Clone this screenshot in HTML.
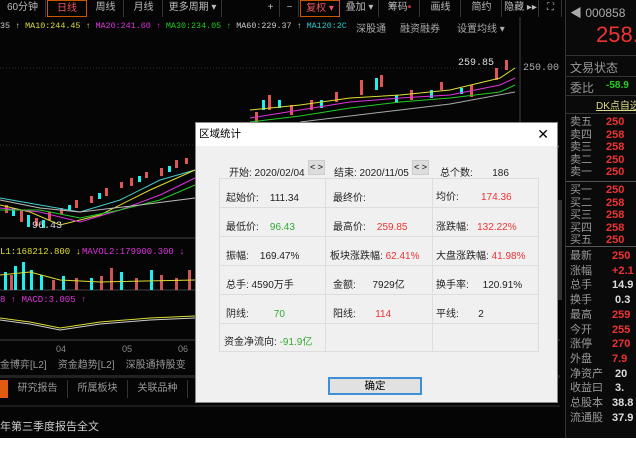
<!DOCTYPE html>
<html><head><meta charset="utf-8"><style>
*{margin:0;padding:0;box-sizing:border-box}
body{width:636px;height:449px;background:#fff;overflow:hidden;position:relative;font-family:"Liberation Sans","Noto Sans CJK SC",sans-serif;font-size:11px}
.abs{position:absolute;white-space:nowrap}
#main{position:absolute;left:0;top:0;width:636px;height:438px;background:#050505}
.tb{position:absolute;top:0;height:17px;color:#bbb;font-size:10px;line-height:16px;text-align:center;border-right:1px solid #333;overflow:hidden;white-space:nowrap}
.rp{position:absolute;left:565px;top:0;width:71px;height:438px;background:#0a0a0a;border-left:1px solid #333;overflow:hidden}
.rl{position:absolute;left:4px;color:#999;font-size:11px}
.rv{position:absolute;left:40px;color:#e33;font-weight:bold;font-size:11px}
#dlg{position:absolute;left:195px;top:122px;width:363px;height:281px;background:#f0f0f0;border:1px solid #888}
#dlg .title{height:23px;background:#fff;font-size:10.5px;line-height:23px;padding-left:3px;color:#000}
.cell{position:absolute;font-size:10px;color:#222;white-space:nowrap}
.r{color:#e33}.g{color:#3a3}
</style></head><body>
<div id="main">
<svg width="563" height="438" style="position:absolute;left:0;top:0">
<line x1="0" y1="68" x2="520" y2="68" stroke="#333" stroke-dasharray="1,2"/>
<line x1="0" y1="145" x2="520" y2="145" stroke="#333" stroke-dasharray="1,2"/>
<line x1="0" y1="238" x2="560" y2="238" stroke="#444"/>
<line x1="0" y1="290" x2="560" y2="290" stroke="#444"/>
<line x1="0" y1="340" x2="560" y2="340" stroke="#444"/>
<line x1="520" y1="17" x2="520" y2="360" stroke="#444"/>
<g fill="#e05555">
<rect x="5" y="205" width="3" height="8"/><rect x="20" y="210" width="3" height="12"/><rect x="35" y="218" width="3" height="8"/><rect x="48" y="212" width="3" height="8"/><rect x="60" y="208" width="3" height="6"/><rect x="75" y="200" width="3" height="8"/><rect x="90" y="196" width="3" height="7"/><rect x="105" y="188" width="3" height="8"/><rect x="120" y="182" width="3" height="6"/><rect x="130" y="178" width="3" height="8"/><rect x="145" y="172" width="3" height="6"/><rect x="160" y="168" width="3" height="8"/><rect x="175" y="160" width="3" height="8"/><rect x="185" y="158" width="3" height="6"/>
<rect x="255" y="112" width="3" height="10"/><rect x="268" y="95" width="3" height="15"/><rect x="290" y="105" width="3" height="10"/><rect x="310" y="100" width="3" height="10"/><rect x="335" y="92" width="3" height="10"/><rect x="360" y="80" width="3" height="15"/><rect x="380" y="75" width="3" height="12"/><rect x="410" y="90" width="3" height="10"/><rect x="440" y="82" width="3" height="8"/><rect x="470" y="85" width="3" height="12"/><rect x="495" y="68" width="3" height="12"/><rect x="505" y="60" width="3" height="10"/>
</g>
<g fill="#2ee">
<rect x="12" y="208" width="3" height="8"/><rect x="27" y="215" width="3" height="12"/><rect x="42" y="220" width="3" height="8"/><rect x="68" y="205" width="3" height="6"/><rect x="98" y="193" width="3" height="6"/><rect x="138" y="176" width="3" height="6"/><rect x="168" y="166" width="3" height="6"/>
<rect x="262" y="100" width="3" height="10"/><rect x="278" y="100" width="3" height="8"/><rect x="320" y="100" width="3" height="8"/><rect x="375" y="78" width="3" height="12"/><rect x="395" y="95" width="3" height="8"/><rect x="430" y="90" width="3" height="8"/><rect x="460" y="88" width="3" height="6"/></g>
<polyline points="0,198 40,205 80,212 120,200 160,180 195,170" fill="none" stroke="#4cc"/>
<polyline points="0,205 30,212 60,225 100,215 150,190 195,170" fill="none" stroke="#dd3"/>
<polyline points="0,208 40,212 80,222 120,210 160,195 195,178" fill="none" stroke="#d3d"/>
<polyline points="0,210 40,210 80,218 120,210 160,200 195,185" fill="none" stroke="#2c2"/>
<polyline points="0,200 40,208 80,212 140,205 195,198" fill="none" stroke="#bbb"/>
<polyline points="250,110 300,105 350,98 400,95 450,90 500,78 515,68" fill="none" stroke="#dd3"/>
<polyline points="250,118 300,110 350,102 400,98 450,95 500,85 515,78" fill="none" stroke="#d3d"/>
<polyline points="250,122 300,116 350,108 400,102 450,98 500,92 515,85" fill="none" stroke="#2c2"/>
<polyline points="300,122 400,110 450,104 515,92" fill="none" stroke="#aaa"/>
<text x="32" y="228" fill="#ddd" font-size="10" font-family="Liberation Mono">96.43</text>
<text x="458" y="65" fill="#ddd" font-size="10" font-family="Liberation Mono">259.85</text>
<text x="523" y="70" fill="#aaa" font-size="10" font-family="Liberation Mono">250.00</text>
<text x="523" y="150" fill="#aaa" font-size="10" font-family="Liberation Mono">200.00</text>
<text x="0" y="254" fill="#dd3" font-size="9" font-family="Liberation Mono">L1:168212.800 ↓</text>
<text x="82" y="254" fill="#d3d" font-size="9" font-family="Liberation Mono">MAVOL2:179900.300 ↓</text>
<g fill="#2ee"><rect x="4" y="272" width="3" height="18"/><rect x="14" y="266" width="3" height="24"/><rect x="22" y="262" width="3" height="28"/><rect x="30" y="270" width="3" height="20"/><rect x="40" y="275" width="3" height="15"/><rect x="62" y="276" width="3" height="14"/><rect x="90" y="278" width="3" height="12"/><rect x="120" y="272" width="3" height="18"/><rect x="150" y="270" width="3" height="20"/></g>
<g fill="#c55"><rect x="10" y="275" width="3" height="15"/><rect x="52" y="280" width="3" height="10"/><rect x="75" y="278" width="3" height="12"/><rect x="100" y="276" width="3" height="14"/><rect x="110" y="268" width="3" height="22"/><rect x="135" y="278" width="3" height="12"/><rect x="160" y="275" width="3" height="15"/><rect x="175" y="278" width="3" height="12"/><rect x="188" y="270" width="3" height="20"/></g>
<polyline points="0,275 30,272 60,280 100,282 195,280" fill="none" stroke="#dd3"/>
<text x="0" y="302" fill="#d3d" font-size="9" font-family="Liberation Mono">8 ↑ MACD:3.005 ↑</text>
<polyline points="0,318 30,322 60,328 100,322 150,318 195,316" fill="none" stroke="#dd3"/>
<polyline points="0,320 30,324 60,330 100,324 150,320 195,318" fill="none" stroke="#ccc"/>
<text x="56" y="352" fill="#888" font-size="9">04</text><text x="122" y="352" fill="#888" font-size="9">05</text><text x="178" y="352" fill="#888" font-size="9">06</text>
</svg>
<div class="tb" style="left:0;width:46px">60分钟</div>
<div class="tb" style="left:47px;width:40px;border:1px solid #c50;color:#e55">日线</div>
<div class="tb" style="left:88px;width:36px">周线</div>
<div class="tb" style="left:125px;width:38px">月线</div>
<div class="tb" style="left:164px;width:58px">更多周期 ▾</div>
<div class="tb" style="left:262px;width:18px">+</div>
<div class="tb" style="left:281px;width:18px">−</div>
<div class="tb" style="left:300px;width:40px;border:1px solid #c50;color:#e55">复权 ▾</div>
<div class="tb" style="left:341px;width:38px">叠加 ▾</div>
<div class="tb" style="left:380px;width:40px">筹码<span style="color:#e33">•</span></div>
<div class="tb" style="left:421px;width:40px">画线</div>
<div class="tb" style="left:462px;width:40px">简约</div>
<div class="tb" style="left:503px;width:36px">隐藏 ▸▸</div>
<div class="tb" style="left:540px;width:22px">⛶</div>
<div class="abs" style="left:0;top:21px;font-size:8.4px;font-family:'Liberation Mono',monospace;color:#ccc">35 ↑ <span style="color:#dd3">MA10:244.45 ↑</span> <span style="color:#d3d">MA20:241.60 ↑</span> <span style="color:#2c2">MA30:234.05 ↑</span> MA60:229.37 ↑ <span style="color:#2cc">MA120:2C</span></div>
<div class="abs" style="left:356px;top:20px;color:#aaa;font-size:10px">深股通</div>
<div class="abs" style="left:400px;top:20px;color:#aaa;font-size:10px">融资融券</div>
<div class="abs" style="left:457px;top:20px;color:#aaa;font-size:10px">设置均线 ▾</div>
<div class="abs" style="left:0;top:356px;color:#999;font-size:10px">金博弈[L2] &nbsp;&nbsp; 资金趋势[L2] &nbsp;&nbsp; 深股通持股变</div>
<div class="abs" style="left:0;top:375px;width:560px;height:3px;background:#222"></div>
<div class="abs" style="left:0;top:380px;width:8px;height:18px;background:#e05a10"></div>
<div class="abs" style="left:8px;top:380px;width:190px;height:18px;color:#999;font-size:10px;line-height:18px">
<span style="display:inline-block;width:60px;text-align:center;border-right:1px solid #333">研究报告</span><span style="display:inline-block;width:60px;text-align:center;border-right:1px solid #333">所属板块</span><span style="display:inline-block;width:60px;text-align:center;border-right:1px solid #333">关联品种</span></div>
<div class="abs" style="left:0;top:405px;width:560px;height:2px;background:#1c1c1c"></div>
<div class="abs" style="left:0;top:418px;color:#ccc;font-size:11px">年第三季度报告全文</div>
<div class="abs" style="left:557px;top:200px;width:5px;height:100px;background:#333"></div>
</div>
<div class="rp">
<div class="abs" style="left:4px;top:4px;color:#aaa;font-size:12px">◀ 000858</div>
<div class="abs" style="left:30px;top:22px;color:#e33;font-size:22px">258.</div>
<div style="position:absolute;left:0;top:55px;width:71px;height:1px;background:#333"></div>
<div class="rl" style="top:59px;font-size:12px">文易状态</div>
<div style="position:absolute;left:0;top:76px;width:71px;height:1px;background:#333"></div>
<div class="rl" style="top:79px;font-size:12px">委比</div><div class="abs" style="left:40px;top:80px;color:#2c2;font-weight:bold;font-size:10px">-58.9</div>
<div style="position:absolute;left:0;top:95px;width:71px;height:1px;background:#333"></div>
<div class="abs" style="left:30px;top:97px;color:#dd8;font-size:10px;text-decoration:underline">DK点自选</div>
<div style="position:absolute;left:0;top:113px;width:71px;height:1px;background:#333"></div>
<div class="rl" style="top:116px;line-height:12.5px">卖五<br>卖四<br>卖三<br>卖二<br>卖一</div>
<div class="rv" style="top:116px;line-height:12.5px">250<br>258<br>258<br>250<br>250</div>
<div style="position:absolute;left:0;top:181px;width:71px;height:1px;background:#555"></div>
<div class="rl" style="top:184px;line-height:12.5px">买一<br>买二<br>买三<br>买四<br>买五</div>
<div class="rv" style="top:184px;line-height:12.5px">250<br>258<br>258<br>258<br>250</div>
<div style="position:absolute;left:0;top:246px;width:71px;height:1px;background:#555"></div>
<div class="rl" style="top:249px;line-height:14.7px">最新<br>涨幅<br>总手<br>换手<br>最高<br>今开<br>涨停<br>外盘<br>净资产<br>收益曰<br>总股本<br>流通股</div>
<div class="rv" style="top:249px;left:46px;line-height:14.7px">250<br>+2.1<br><span style="color:#ddd">14.9</span><br><span style="color:#ddd">&nbsp;0.3</span><br>259<br>255<br>270<br>7.9<br><span style="color:#ddd">&nbsp;20</span><br><span style="color:#ddd">&nbsp;3.</span><br><span style="color:#ddd">38.8</span><br><span style="color:#ddd">37.9</span></div>
</div>
<div id="dlg">
<div class="title">区域统计<span style="position:absolute;right:8px;top:0;font-size:14px">✕</span></div>
<div class="cell" style="left:33px;top:41px">开始: 2020/02/04</div>
<div class="abs" style="left:112px;top:37px;width:17px;height:15px;background:#ddd;border:1px solid #ccc;font-size:9px;line-height:13px;text-align:center">&lt; &gt;</div>
<div class="cell" style="left:138px;top:41px">结束: 2020/11/05</div>
<div class="abs" style="left:216px;top:37px;width:17px;height:15px;background:#ddd;border:1px solid #ccc;font-size:9px;line-height:13px;text-align:center">&lt; &gt;</div>
<div class="cell" style="left:244px;top:41px">总个数: &nbsp;&nbsp;&nbsp;&nbsp;&nbsp; 186</div>
<svg style="position:absolute;left:23px;top:55px" width="321" height="175"><g stroke="#ddd" fill="none"><rect x="0.5" y="0.5" width="319" height="173"/>
<line x1="0" y1="29.5" x2="320" y2="29.5"/><line x1="0" y1="58.5" x2="320" y2="58.5"/><line x1="0" y1="87.5" x2="320" y2="87.5"/><line x1="0" y1="116.5" x2="320" y2="116.5"/><line x1="0" y1="145.5" x2="320" y2="145.5"/>
<line x1="106.5" y1="0" x2="106.5" y2="174"/><line x1="213.5" y1="0" x2="213.5" y2="174"/></g></svg>
<div class="cell" style="left:30px;top:66px">起始价: &nbsp;&nbsp;&nbsp;111.34</div>
<div class="cell" style="left:137px;top:66px">最终价:</div>
<div class="cell" style="left:240px;top:65px">均价: &nbsp;&nbsp;&nbsp;&nbsp;&nbsp;&nbsp;&nbsp;<span class="r">174.36</span></div>
<div class="cell" style="left:30px;top:95px">最低价: &nbsp;&nbsp;&nbsp;<span class="g">96.43</span></div>
<div class="cell" style="left:137px;top:95px">最高价: &nbsp;&nbsp;&nbsp;<span class="r">259.85</span></div>
<div class="cell" style="left:240px;top:95px">涨跌幅: &nbsp;&nbsp;<span class="r">132.22%</span></div>
<div class="cell" style="left:30px;top:124px">振幅: &nbsp;&nbsp;&nbsp;169.47%</div>
<div class="cell" style="left:134px;top:124px">板块涨跌幅: <span class="r">62.41%</span></div>
<div class="cell" style="left:240px;top:124px">大盘涨跌幅: <span class="r">41.98%</span></div>
<div class="cell" style="left:30px;top:153px">总手: 4590万手</div>
<div class="cell" style="left:137px;top:153px">金额: &nbsp;&nbsp;&nbsp;&nbsp;&nbsp;7929亿</div>
<div class="cell" style="left:240px;top:153px">换手率: &nbsp;&nbsp;&nbsp;&nbsp;120.91%</div>
<div class="cell" style="left:30px;top:182px">阴线: &nbsp;&nbsp;&nbsp;&nbsp;&nbsp;&nbsp;&nbsp;&nbsp;<span class="g">70</span></div>
<div class="cell" style="left:137px;top:182px">阳线: &nbsp;&nbsp;&nbsp;&nbsp;&nbsp;&nbsp;<span class="r">114</span></div>
<div class="cell" style="left:240px;top:182px">平线: &nbsp;&nbsp;&nbsp;&nbsp;&nbsp;&nbsp;2</div>
<div class="cell" style="left:28px;top:210px">资金净流向: <span class="g">-91.9亿</span></div>
<div class="abs" style="left:132px;top:254px;width:94px;height:18px;background:#e1e1e1;border:2px solid #3c8fd8;font-size:10.5px;line-height:14px;text-align:center">确定</div>
</div>
</body></html>
